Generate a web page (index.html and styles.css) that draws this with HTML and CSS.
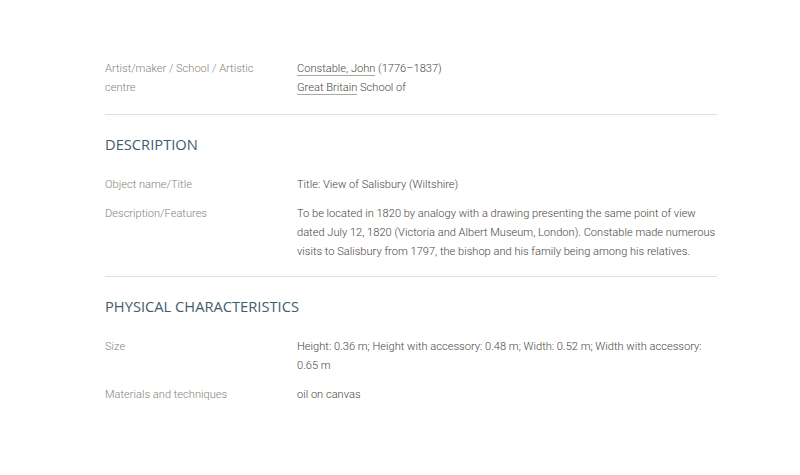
FILE: index.html
```html
<!DOCTYPE html>
<html lang="en">
<head>
<meta charset="utf-8">
<title>Record</title>
<link rel="stylesheet" href="styles.css">
</head>
<body>
<main class="record">
  <section class="block first">
    <div class="row">
      <div class="label">Artist/maker / School / Artistic centre</div>
      <div class="value"><a href="#">Constable, John</a> (1776–1837)<br><a href="#">Great Britain</a> School of</div>
    </div>
  </section>
  <section class="block">
    <h2 class="heading">DESCRIPTION</h2>
    <div class="row">
      <div class="label">Object name/Title</div>
      <div class="value">Title: View of Salisbury (Wiltshire)</div>
    </div>
    <div class="row">
      <div class="label">Description/Features</div>
      <div class="value">To be located in 1820 by analogy with a drawing presenting the same point of view dated July 12, 1820 (Victoria and Albert Museum, London). Constable made numerous visits to Salisbury from 1797, the bishop and his family being among his relatives.</div>
    </div>
  </section>
  <section class="block last">
    <h2 class="heading">PHYSICAL CHARACTERISTICS</h2>
    <div class="row">
      <div class="label">Size</div>
      <div class="value">Height: 0.36 m; Height with accessory: 0.48 m; Width: 0.52 m; Width with accessory: 0.65 m</div>
    </div>
    <div class="row">
      <div class="label">Materials and techniques</div>
      <div class="value">oil on canvas</div>
    </div>
  </section>
</main>
</body>
</html>
```
FILE: styles.css
```css
html, body {
  margin: 0;
  padding: 0;
  background: #ffffff;
}
body {
  font-family: Roboto, "Liberation Sans", sans-serif;
  font-weight: 300;
  font-size: 11.1px;
  line-height: 19px;
  color: #4a4540;
}
.record {
  width: 612px;
  margin-left: 105px;
  padding-top: 59px;
}
.block {
  display: flex;
  flex-direction: column;
  gap: 10px;
  padding: 19px 0 15px;
  border-bottom: 1px solid #d6e2e5;
}
.block.first {
  padding: 0 0 17px;
}
.block.last {
  border-bottom: none;
}
.heading {
  margin: 0 0 11px;
  font-family: "Open Sans", "Noto Sans", sans-serif;
  font-weight: 400;
  font-size: 14.7px;
  line-height: 20px;
  color: #3f5d6c;
  letter-spacing: 0;
}
.row {
  display: grid;
  grid-template-columns: 192px 1fr;
}
.label {
  padding-right: 24px;
  color: #8a8179;
}
.value a {
  color: inherit;
  text-decoration: none;
  border-bottom: 1px solid #a9a6a3;
}
```
